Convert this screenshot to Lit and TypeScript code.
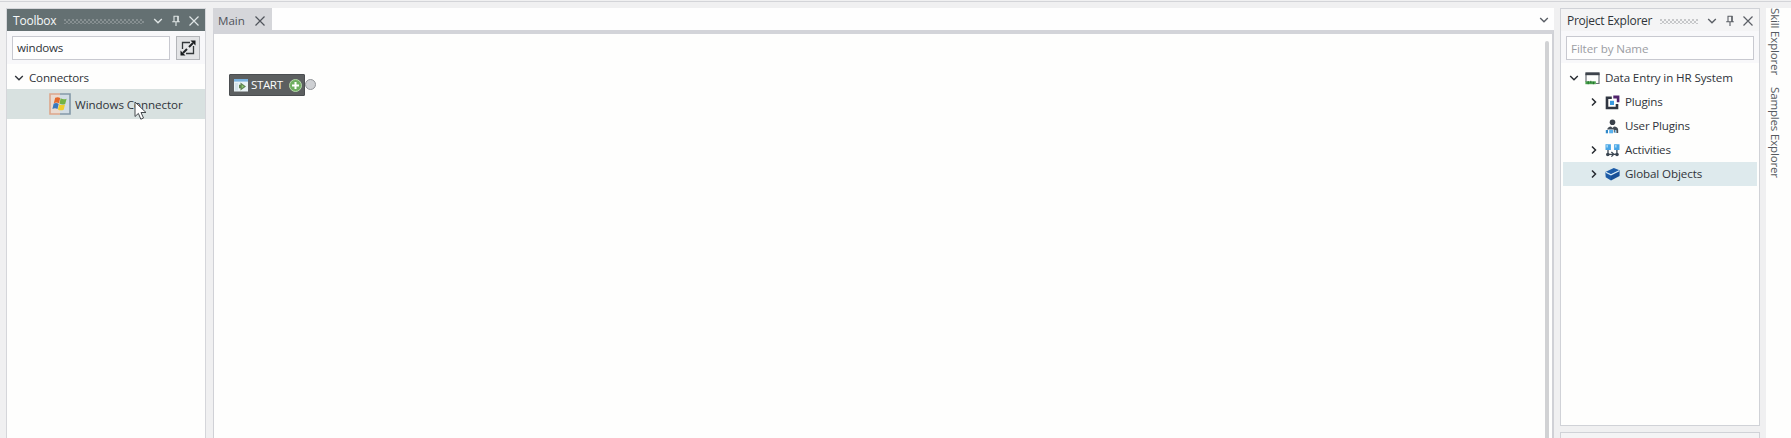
import { LitElement, html, svg, css } from "lit";
import { customElement, property } from "lit/decorators.js";

const chevDown = html`<svg width="10" height="10" viewBox="0 0 10 10"><path d="M1.2 3L5 6.7L8.8 3" fill="none" stroke="currentColor" stroke-width="1.4"/></svg>`;
const chevRight = html`<svg width="10" height="10" viewBox="0 0 10 10"><path d="M3 1.5L6.5 5L3 8.5" fill="none" stroke="currentColor" stroke-width="1.5"/></svg>`;
const pin = html`<svg width="10" height="12" viewBox="0 0 10 12"><path d="M2.5 1.2H7.5M3 1V6.5M6.7 1V6.5M7.3 1V6.5M1.2 6.8H8.8M5 7V11" fill="none" stroke="currentColor" stroke-width="1.1"/></svg>`;
const cross = html`<svg width="10" height="10" viewBox="0 0 10 10"><path d="M.5 .5L9.5 9.5M9.5 .5L.5 9.5" fill="none" stroke="currentColor" stroke-width="1.2"/></svg>`;

const glyphs: Record<string, unknown> = {
  project: svg`<path d="M1 11V2.5M14 2.5V12.5H11" fill="none" stroke="#6a6f77" stroke-width="1.2"/><path d="M.4 1.3H14.6V4.2H.4Z" fill="#3d434b"/><path d="M.4 10.3H10.8V13.2H.4Z" fill="#48a04b"/><path d="M3.2 10V13.2M5.8 9.8V12M8.4 10.8V13.2" stroke="#1f6b2b" stroke-width=".9"/>`,
  plugins: svg`<path d="M6.8 2.8H2V13H12V9" fill="none" stroke="#303641" stroke-width="2.6"/><path d="M5 5.8H9V10H5Z" fill="#3a9ae0"/><path d="M8.3 .5H14.4V7.2H11.8V3.4H8.3Z" fill="#50236b"/>`,
  user: svg`<circle cx="7.5" cy="3.3" r="2.8" fill="#3b424b"/><path d="M2.2 10.6C2.2 9 4 7.8 6 7.6L7.5 9L9 7.6C11.5 7.8 13.2 9 13.2 11V14H11.4V11.2H10V13.6H8.8V10.6H4.4Z" fill="#444c55"/><path d="M.8 11H3V14.3H.8Z" fill="#3188c8"/><path d="M4.2 10.8H8V14.3H4.2Z" fill="#59b2ef"/><path d="M9.7 11H11V14H9.7Z" fill="#8bc8ef"/>`,
  activities: svg`<path d="M.5 1.2H5.9V7H.5ZM9.1 1.2H14.5V7H9.1Z" fill="#48a5e5"/><path d="M1.3 2H3V4.5H1.3ZM9.9 2H11.6V4.5H9.9Z" fill="#9bd4f5"/><path d="M3 7V11.3M11.9 7V11.3M3 11.3H12" stroke="#3b4651" stroke-width="1.3"/><circle cx="2.8" cy="11.5" r="1.8" fill="#3b4651"/><circle cx="12" cy="11.5" r="1.8" fill="#3b4651"/><path d="M6.4 9L8.8 11.3L6.4 13.6" fill="none" stroke="#3b4651" stroke-width="1.3"/>`,
  globals: svg`<path d="M.3 4.9L8.8 .9L14.6 3.3L6 7.5Z" fill="#1d5ca8"/><path d="M.3 4.9L6 7.5V13.5L.7 10.2Z" fill="#1c5ba6"/><path d="M6 7.5L14.6 3.3V9.1L6 13.5Z" fill="#174f96"/><path d="M.7 5.3L6 7.8L14.2 3.8" fill="none" stroke="#d8ecf8" stroke-width="1.1"/>`,
};

const base = css`
  :host { box-sizing: border-box; font: 11.6px/16px "Open Sans", "Noto Sans", sans-serif; letter-spacing: -0.2px; color: #30343a; }
  *, *::before, *::after { box-sizing: border-box; }
  svg { display: block; flex: none; }
`;

@customElement("panel-header")
class PanelHeader extends LitElement {
  @property() label = "";
  static styles = [base, css`
    :host { display: flex; align-items: center; height: 22px; padding: 2px 6px 0 6px; color: inherit; }
    .label { font-size: 12px; white-space: nowrap; letter-spacing: var(--title-spacing, -0.25px); }
    .dots { flex: 1; height: 5px; margin: 0 9px 0 8px; opacity: .5; background-image: radial-gradient(circle at 1px 1px, currentColor .6px, transparent .8px), radial-gradient(circle at 1px 1px, currentColor .6px, transparent .8px); background-size: 4px 4px; background-position: 0 0, 2px 2px; }
    .tools { display: flex; align-items: center; gap: 8px; color: var(--tool, #5b5f66); }
  `];
  render() {
    return html`<span class="label">${this.label}</span><span class="dots"></span><span class="tools">${chevDown}${pin}${cross}</span>`;
  }
}

@customElement("tree-row")
class TreeRow extends LitElement {
  @property() label = "";
  @property() icon = "";
  @property() arrow = "";
  @property({ type: Number }) level = 0;
  @property({ type: Boolean, reflect: true }) selected = false;
  static styles = [base, css`
    :host { display: flex; align-items: center; height: 24px; padding-left: 6px; }
    :host([selected]) { background: #deeaed; }
    :host([level="1"]) { padding-left: 26px; }
    .arrow { width: 10px; height: 10px; margin-right: 6px; color: #272b31; }
    .label { margin-left: 5px; white-space: nowrap; }
    :host(:not([level])) .label { letter-spacing: -0.12px; }
    :host([icon="globals"]) .label { letter-spacing: -0.1px; }
  `];
  render() {
    const arrow = this.arrow === "down" ? chevDown : this.arrow === "right" ? chevRight : "";
    return html`<span class="arrow">${arrow}</span><svg width="15" height="15" viewBox="0 0 15 15">${glyphs[this.icon]}</svg><span class="label">${this.label}</span>`;
  }
}

@customElement("app-root")
class AppRoot extends LitElement {
  static styles = [base, css`
    :host { display: flex; flex-direction: column; height: 438px; background: #f0f0f1; overflow: hidden; }
    .top { height: 8px; flex: none; padding-top: 1px; }
    .top::before { content: ""; display: block; height: 1px; background: #d3d4d8; }
    .main { flex: 1; min-height: 0; display: flex; }
    .toolbox { width: 200px; margin-left: 6px; border: 1px solid #d5d6da; border-bottom: 0; background: #fefefd; position: relative; }
    .dark { background: #647072; color: #f6f8f8; --tool: #dfe5e5; --title-spacing: -0.22px; }
    .search { display: flex; gap: 6px; padding: 5px 5px 2px; height: 33px; background: #f8f8fa; }
    .field { height: 24px; flex: 1; border: 1px solid #c8c9d0; background: #fefefe; padding: 3px 4px; }
    .expand { width: 24px; height: 24px; border: 1px solid #b3b5b9; background: #e3e4e6; padding: 3px; }
    .group { display: flex; align-items: center; height: 25px; padding: 2px 7px 0; gap: 5px; }
    .item { display: flex; align-items: center; height: 30px; padding-left: 42px; gap: 4px; background: #d8e1e0; }
    .item .label { letter-spacing: -0.06px; padding-top: 1px; }
    .cursor { position: absolute; left: 127px; top: 92px; }
    .editor { width: 1341px; margin-left: 7px; display: flex; flex-direction: column; }
    .tabs { height: 22px; display: flex; background: #fefefe; }
    .tab { width: 59px; display: flex; align-items: center; gap: 9px; padding: 3px 0 0 5px; background: #d5d6da; color: #50545b; }
    .tab .label { width: 28px; letter-spacing: 0; }
    .menu { margin: 7px 5px 0 auto; color: #5b5f66; }
    .canvas { flex: 1; border: 1px solid #d0d1d6; border-top: 4px solid #d3d4d9; border-right-width: 2px; border-bottom: 0; background: #fefefd; position: relative; }
    .scroll { position: absolute; right: 3px; top: 7px; bottom: 0; width: 4px; border-radius: 2px 2px 0 0; background: #d1d2d4; }
    .node { position: absolute; left: 15px; top: 40px; width: 76px; height: 22px; border: 1px solid #4b4e51; border-radius: 1px; background: #5c5f60; color: #fbfbfb; display: flex; align-items: center; padding: 0 2px 0 4px; }
    .node .label { flex: 1; margin-left: 3px; letter-spacing: -0.4px; }
    .port { position: absolute; left: 91px; top: 45px; width: 11px; height: 11px; border: 1px solid #929599; border-radius: 50%; background: #ced0d3; }
    .right { width: 200px; margin-left: 6px; display: flex; flex-direction: column; gap: 6px; }
    .explorer { height: 418px; border: 1px solid #d0d2d7; background: #fefefd; }
    .light { background: #f4f4f5; --title-spacing: -0.26px; }
    .filter { height: 32px; padding: 5px 5px 0; display: flex; background: #f8f8fa; }
    .filter .field { color: #9b9da3; padding-top: 4px; letter-spacing: -0.08px; }
    .tree { padding: 3px 2px 0; }
    .next { flex: 1; border: 1px solid #d0d2d7; border-bottom: 0; background: #f4f4f5; }
    .rail { margin-left: 6px; flex: 1; background: #fefefd; display: flex; flex-direction: column; align-items: flex-start; gap: 12px; color: #555960; }
    .rail span { writing-mode: vertical-rl; line-height: 19px; letter-spacing: -0.2px; }
  `];
  render() {
    return html`
      <div class="top"></div>
      <div class="main">
        <section class="toolbox">
          <panel-header class="dark" label="Toolbox"></panel-header>
          <div class="search">
            <div class="field">windows</div>
            <div class="expand"><svg width="16" height="16" viewBox="0 0 16 16"><path d="M10 2.5H2.5V9M13.5 6V13.5H6" fill="none" stroke="#33373a" stroke-width="1.3"/><path d="M3 13L7 9M9 7L13 3" stroke="#202326" stroke-width="2"/><path d="M10.5 .5H15.5V5.5ZM.5 10.5V15.5H5.5Z" fill="#181b1d"/></svg></div>
          </div>
          <div class="group">${chevDown}<span>Connectors</span></div>
          <div class="item">
            <svg width="22" height="22" viewBox="0 0 22 22"><path d="M1 1H21V21H1Z" fill="#e0e5e6"/><path d="M11 1H1V21H11" fill="#eadbd1" stroke="#dda78b" stroke-width="1.6"/><path d="M11 1H21V21H11" fill="#d2dde5" stroke="#8499a8" stroke-width="1.6"/><path d="M6.2 4.8Q8.8 3.4 11.2 5L10 10.2Q7.4 8.8 4.8 10.2Z" fill="#e3682b"/><path d="M11.7 5.3Q14.5 7 17.6 5.7L16.2 10.9Q13.1 12.2 10.4 10.6Z" fill="#73b343"/><path d="M4.6 10.8Q7.2 9.4 9.7 10.9L8.5 16Q6 14.6 3.4 16Z" fill="#3978bd"/><path d="M10.2 11.2Q13 12.8 16 11.5L14.7 16.7Q11.6 18 8.9 16.4Z" fill="#f0cd2c"/></svg>
            <span class="label">Windows Connector</span>
          </div>
          <svg class="cursor" width="14" height="20" viewBox="0 0 14 20"><path d="M1 1V15.5L4.4 12.4L6.8 18.2L9.5 17L7 11.5H12Z" fill="#fff" stroke="#44484c" stroke-width="1"/></svg>
        </section>
        <section class="editor">
          <div class="tabs"><div class="tab"><span class="label">Main</span>${cross}</div><div class="menu">${chevDown}</div></div>
          <div class="canvas">
            <div class="node">
              <svg width="14" height="13" viewBox="0 0 14 13"><path d="M0 0H14V12.5H0Z" fill="#e9f2f5"/><path d="M0 0H14V2.6H0Z" fill="#79b2df"/><path d="M1 4H4V11.5H1Z" fill="#d3e2ea"/><path d="M6.5 3.4L12 7.5L6.5 11.6V9.2H5V5.8H6.5Z" fill="#5f8353"/><path d="M7.7 5.8L10 7.5L7.7 9.2Z" fill="#8fd06f"/></svg>
              <span class="label">START</span>
              <svg width="13" height="13" viewBox="0 0 13 13"><circle cx="6.5" cy="6.5" r="6" fill="#6fae60" stroke="#b6d9ac"/><path d="M6.5 3V10M3 6.5H10" stroke="#fff" stroke-width="2"/></svg>
            </div>
            <div class="port"></div>
            <div class="scroll"></div>
          </div>
        </section>
        <section class="right">
          <div class="explorer">
            <panel-header class="light" label="Project Explorer"></panel-header>
            <div class="filter"><div class="field">Filter by Name</div></div>
            <div class="tree">
              <tree-row arrow="down" icon="project" label="Data Entry in HR System"></tree-row>
              <tree-row level="1" arrow="right" icon="plugins" label="Plugins"></tree-row>
              <tree-row level="1" icon="user" label="User Plugins"></tree-row>
              <tree-row level="1" arrow="right" icon="activities" label="Activities"></tree-row>
              <tree-row level="1" arrow="right" icon="globals" label="Global Objects" selected></tree-row>
            </div>
          </div>
          <div class="next"></div>
        </section>
        <aside class="rail"><span>Skill Explorer</span><span>Samples Explorer</span></aside>
      </div>`;
  }
}
